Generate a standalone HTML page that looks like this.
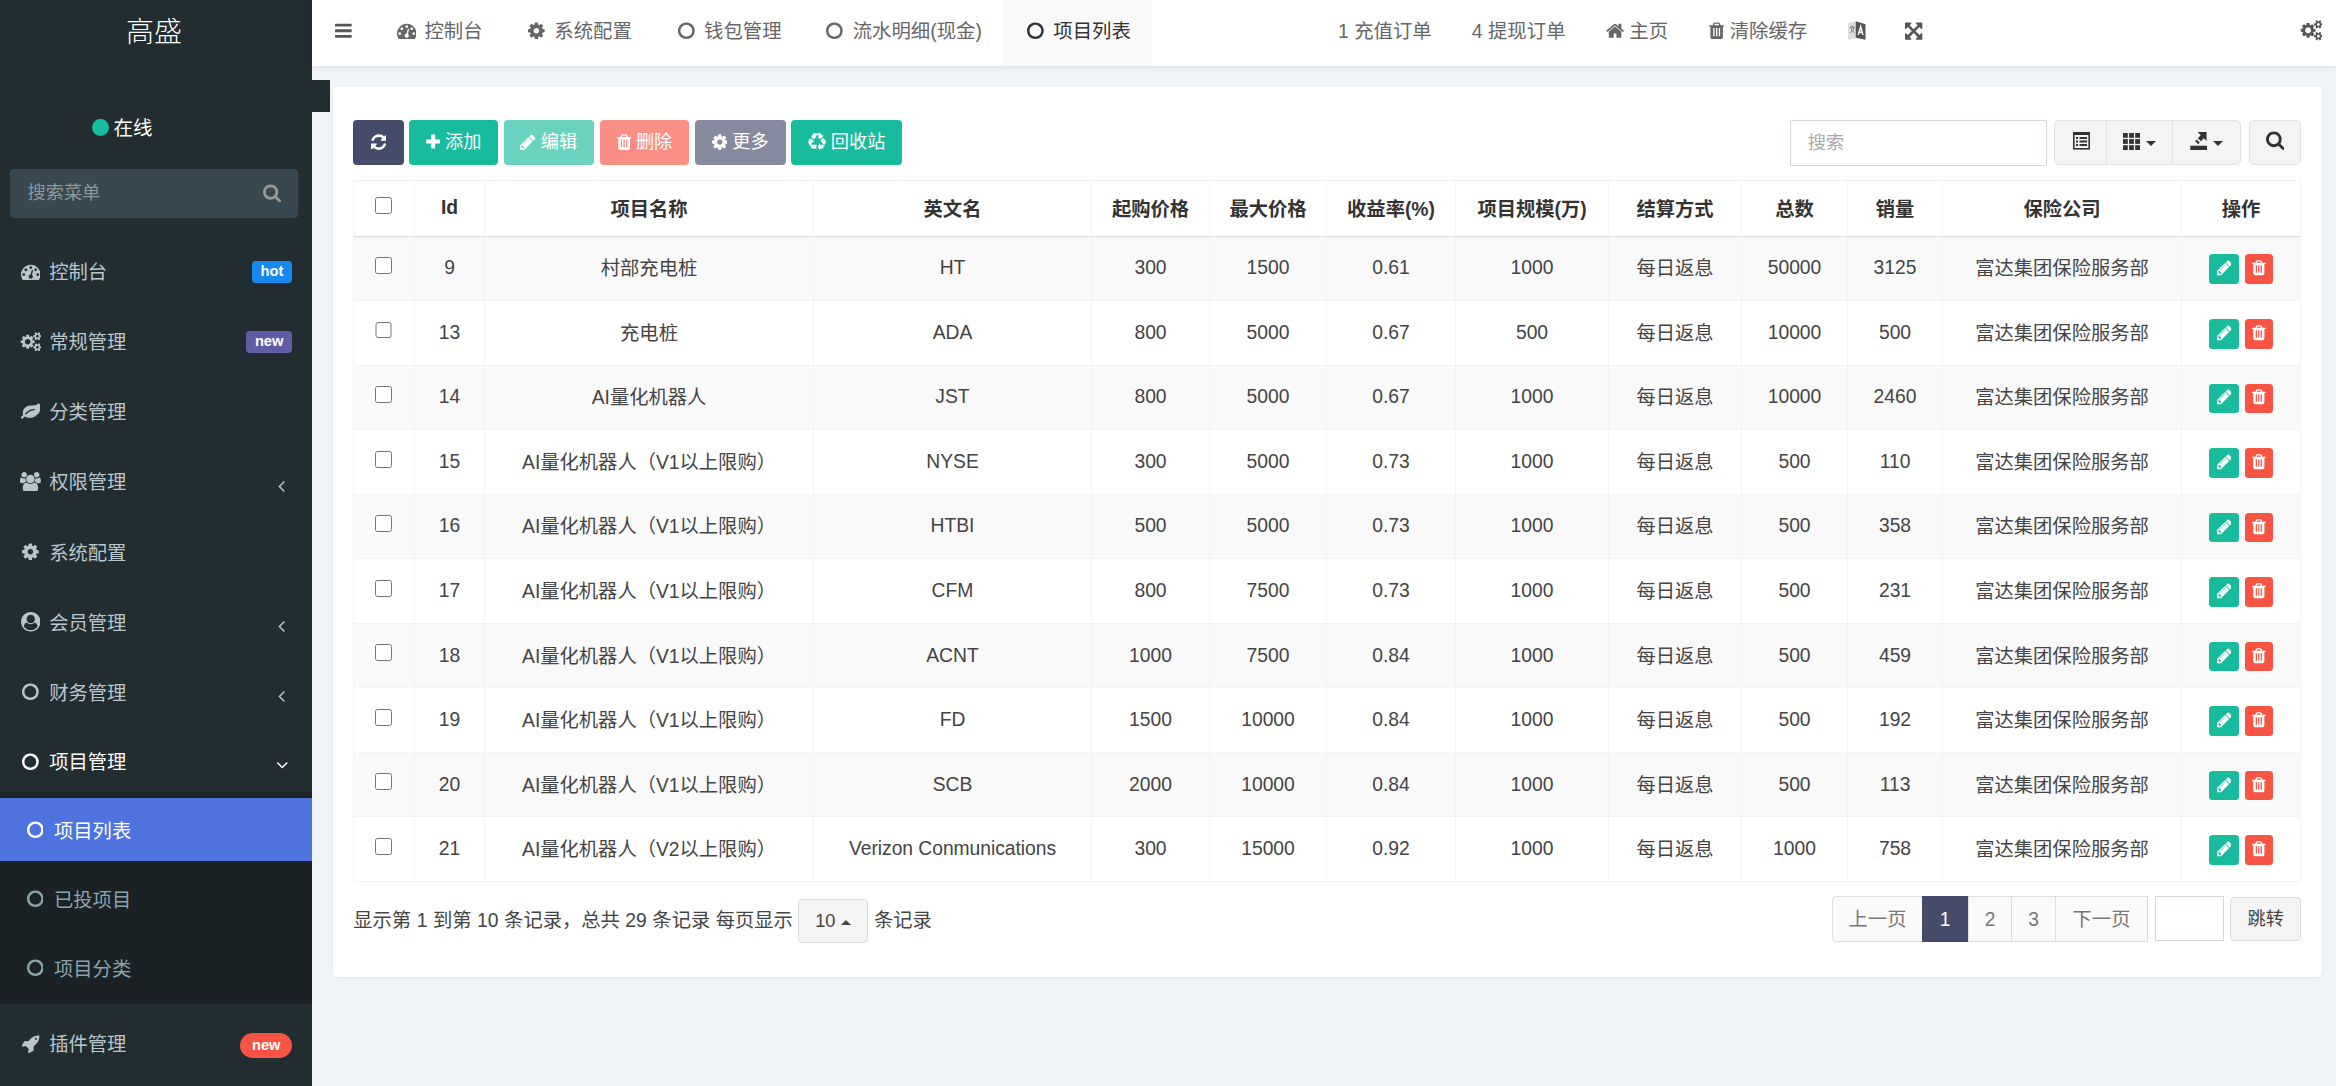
<!DOCTYPE html>
<html lang="zh-CN"><head><meta charset="utf-8"><title>高盛</title>
<style>
*{box-sizing:border-box}
html,body{margin:0;padding:0}
body{width:2336px;height:1086px;background:#f1f4f6;font-family:"Liberation Sans","Noto Sans CJK SC",sans-serif;font-size:19.5px;color:#333;position:relative}
a{text-decoration:none;color:inherit}
ul{list-style:none;margin:0;padding:0}
svg.fa{display:inline-block;vertical-align:-0.143em;flex:none}
.fw{display:inline-block;text-align:center}
/* sidebar */
.sidebar{position:absolute;left:0;top:0;width:312px;height:1086px;background:#222d32;color:#b8c7ce;font-size:19.3px}
.logo{position:absolute;left:0;top:0;width:308px;height:65px;line-height:65px;text-align:center;color:#fff;font-size:28px;font-weight:300}
.logoline{position:absolute;left:0;top:65.5px;width:312px;height:1px;background:#263238}
.user-panel{position:absolute;left:0;top:108px;width:312px;height:40px;color:#fff}
.user-panel .dot{position:absolute;left:92px;top:11.2px;width:16.8px;height:16.8px;border-radius:50%;background:#18bc9c}
.user-panel .txt{position:absolute;left:113.5px;top:0;line-height:40px;font-size:19.5px}
.sidebar-form{position:absolute;left:10px;top:169px;width:288.4px;height:49.2px;background:#374850;border-radius:4px}
.sidebar-form input{position:absolute;left:0;top:0;width:100%;height:100%;border:0;outline:0;background:transparent;padding:0;margin:0}
.sidebar-form .ph{position:absolute;left:17.5px;top:0;line-height:49.2px;font-size:18.2px;color:#8c979d}
.sidebar-form .sb{position:absolute;left:253.2px;top:13.6px;color:#999}
.menu li{position:absolute;left:0;width:312px}
.menu li>a{display:flex;align-items:center;height:61.6px;padding-left:18.1px;position:relative;color:#b8c7ce}
.menu li.active>a{color:#fff}
.menu li>a .t{margin-left:6.1px;position:relative;top:-0.3px}
.menu li>a .fw,.sub a .fw{position:relative;top:1px}
.menu .badge{position:absolute;right:19.9px;top:50%;color:#fff;font-weight:bold;font-size:14.6px;line-height:21.8px;height:21.8px;margin-top:-10.5px;padding:0 8.8px;border-radius:4px;text-align:center}
.menu .ang{position:absolute;left:277.8px;top:24.6px;}
.menu .angd{left:276px;top:24.2px}
.sub{position:absolute;left:0;top:792.4px;width:312px;height:211.6px;background:#1a2226}
.sub a{position:absolute;left:0;width:312px;height:63px;display:flex;align-items:center;padding-left:22.4px;color:#8aa4af}
.sub a .t{margin-left:6.6px}
.sub a.on{background:#4e73df;color:#fff}
/* header */
.header{position:absolute;left:312px;top:0;width:2024px;height:66px;background:#fff;box-shadow:0 1px 5px rgba(0,21,41,.10);color:#666;white-space:nowrap}
.header .it{position:absolute;top:0;height:66px;line-height:63px;display:block;font-size:19.4px}
.header .tab{padding:0 20px}
.header .tab.on{background:#f9f9f9;color:#333}
/* content */
.blk{position:absolute;left:312px;top:80px;width:18.3px;height:32px;background:#222d32}
.panel{position:absolute;left:333px;top:87px;width:1988.6px;height:890px;background:#fff;border-radius:5px;box-shadow:0 1px 3px rgba(0,0,0,.06)}
.btn{position:absolute;top:120.4px;height:44.2px;border-radius:4px;color:#fff;font-size:18.2px;line-height:44.2px;text-align:center;white-space:nowrap}
.btn .fa{vertical-align:-0.143em}
.tb{position:absolute;background:#f4f4f4;border:1px solid #e2e2e2}
.search{position:absolute;left:1790.3px;top:120.4px;width:256.8px;height:45.4px;border:1.3px solid #d2d6de;background:#fff;border-radius:1px}
.search input,.jump input{position:absolute;left:0;top:0;width:100%;height:100%;border:0;outline:0;background:transparent;padding:0;margin:0}
.search span{position:absolute;left:16.4px;top:0;line-height:44px;font-size:18.2px;color:#a9a9a9}
/* table */
table.t{font-size:19.3px;position:absolute;left:353px;top:180px;width:1948px;border-collapse:separate;border-spacing:0;table-layout:fixed;border-right:1px solid #f3f3f3;border-bottom:1px solid #f3f3f3}
table.t th,table.t td{border-left:1px solid #f3f3f3;border-top:1px solid #f3f3f3;text-align:center;padding:0;white-space:nowrap;overflow:hidden}
table.t th{height:57px;font-weight:bold;color:#333;border-bottom:1px solid #ddd}
table.t td{height:64.55px;color:#444}
table.t tbody tr:first-child td{height:63.05px;padding-bottom:2px}
table.t th{padding-bottom:0.6px}
.c{position:relative;top:-1px}
table.t tbody tr:nth-child(odd) td{background:#f9f9f9}
input.cb{width:16.9px;height:16.9px;margin:0;padding:0;vertical-align:middle;position:relative;top:-3.7px;left:-0.6px}
th input.cb{top:-3.2px}
.xb{display:inline-block;height:29.5px;border-radius:3.5px;vertical-align:middle;color:#fff;line-height:29.5px;text-align:center;font-size:17.4px;position:relative;top:1px}
.xb svg{vertical-align:-0.13em}
/* pagination */
.pinfo{position:absolute;left:353.3px;top:899px;line-height:44px;font-size:19.3px;color:#444;white-space:nowrap;word-spacing:0.2px}
.psize{position:absolute;left:797.7px;top:899.2px;width:70.4px;height:43.4px;border:1px solid #ddd;background:#f4f4f4;border-radius:4px;line-height:43px;text-align:center;font-size:18.2px;color:#444}
.pg{position:absolute;top:896.2px;height:45.5px;border:1px solid #ddd;background:#fafafa;color:#777;line-height:45.5px;text-align:center;font-size:19.3px}
</style></head><body>
<aside class="sidebar">
<a class="logo">高盛</a><div class="logoline"></div>
<div class="user-panel"><i class="dot"></i><span class="txt">在线</span></div>
<form class="sidebar-form"><input type="text" name="q"><span class="ph">搜索菜单</span><span class="sb"><svg class="fa" width="18.11" height="19.5" viewBox="64 0 1664 1792" style=""><path fill="#999" d="M1216 832q0-185-131.500-316.500t-316.500-131.500-316.500 131.500-131.500 316.500 131.500 316.500 316.500 131.500 316.500-131.500 131.500-316.500zm512 832q0 52-38 90t-90 38q-54 0-90-38l-343-342q-179 124-399 124-143 0-273.500-55.500t-225-150-150-225-55.500-273.500 55.500-273.500 150-225 225-150 273.500-55.500 273.500 55.500 225 150 150 225 55.500 273.500q0 220-124 399l343 343q37 37 37 90z"/></svg></span></form>
<ul class="menu">
<li style="top:240.6px"><a><span class="fw" style="width:25.07px;"><svg class="fa" width="19.5" height="19.5" viewBox="0 0 1792 1792" style=""><path fill="currentColor" d="M384 1152q0-53-37.500-90.500t-90.500-37.500-90.500 37.500-37.500 90.500 37.500 90.500 90.500 37.500 90.500-37.500 37.500-90.500zm192-448q0-53-37.500-90.500t-90.500-37.500-90.500 37.500-37.500 90.500 37.500 90.500 90.500 37.500 90.500-37.500 37.500-90.500zm428 481l101-382q6-26-7.500-48.500t-38.500-29.500-48 6.500-30 39.500l-101 382q-60 5-107 43.500t-63 98.500q-20 77 20 146t117 89 146-20 89-117q16-60-6-117t-72-91zm660-33q0-53-37.500-90.500t-90.500-37.500-90.500 37.500-37.500 90.500 37.500 90.500 90.500 37.500 90.500-37.500 37.500-90.500zm-640-640q0-53-37.500-90.500t-90.500-37.500-90.500 37.500-37.500 90.500 37.500 90.500 90.500 37.500 90.500-37.500 37.500-90.500zm448 192q0-53-37.500-90.500t-90.500-37.500-90.500 37.500-37.500 90.500 37.500 90.500 90.500 37.500 90.500-37.500 37.500-90.500zm320 448q0 261-141 483-19 29-54 29h-1402q-35 0-54-29-141-221-141-483 0-182 71-348t191-286 286-191 348-71 348 71 286 191 191 286 71 348z"/></svg></span><span class="t">控制台</span><small class="badge" style="background:#1688f0">hot</small></a></li>
<li style="top:310.7px"><a><span class="fw" style="width:25.07px;"><svg class="fa" width="20.89" height="19.5" viewBox="0 0 1920 1792" style=""><path fill="currentColor" d="M960 896q0-106-75-181t-181-75-181 75-75 181 75 181 181 75 181-75 75-181zm768 512q0-52-38-90t-90-38-90 38-38 90q0 53 37.500 90.500t90.500 37.500 90.500-37.500 37.500-90.500zm0-1024q0-52-38-90t-90-38-90 38-38 90q0 53 37.500 90.500t90.500 37.500 90.500-37.500 37.500-90.500zm-384 421v185q0 10-7 19.500t-16 10.500l-155 24q-11 35-32 76 34 48 90 115 7 11 7 20 0 12-7 19-23 30-82.500 89.500t-78.500 59.500q-11 0-21-7l-115-90q-37 19-77 31-11 108-23 155-7 24-30 24h-186q-11 0-20-7.500t-10-17.500l-23-153q-34-10-75-31l-118 89q-7 7-20 7-11 0-21-8-144-133-144-160 0-9 7-19 10-14 41-53t47-61q-23-44-35-82l-152-24q-10-1-17-9.500t-7-19.500v-185q0-10 7-19.500t16-10.500l155-24q11-35 32-76-34-48-90-115-7-11-7-20 0-12 7-20 22-30 82-89t79-59q11 0 21 7l115 90q34-18 77-32 11-108 23-154 7-24 30-24h186q11 0 20 7.500t10 17.500l23 153q34 10 75 31l118-89q8-7 20-7 11 0 21 8 144 133 144 160 0 8-7 19-12 16-42 54t-45 60q23 48 34 82l152 23q10 2 17 10.500t7 19.500zm640 533v140q0 16-149 31-12 27-30 52 51 113 51 138 0 4-4 7-122 71-124 71-8 0-46-47t-52-68q-20 2-30 2t-30-2q-14 21-52 68t-46 47q-2 0-124-71-4-3-4-7 0-25 51-138-18-25-30-52-149-15-149-31v-140q0-16 149-31 13-29 30-52-51-113-51-138 0-4 4-7 4-2 35-20t59-34 30-16q8 0 46 46.500t52 67.500q20-2 30-2t30 2q51-71 92-112l6-2q4 0 124 70 4 3 4 7 0 25-51 138 17 23 30 52 149 15 149 31zm0-1024v140q0 16-149 31-12 27-30 52 51 113 51 138 0 4-4 7-122 71-124 71-8 0-46-47t-52-68q-20 2-30 2t-30-2q-14 21-52 68t-46 47q-2 0-124-71-4-3-4-7 0-25 51-138-18-25-30-52-149-15-149-31v-140q0-16 149-31 13-29 30-52-51-113-51-138 0-4 4-7 4-2 35-20t59-34 30-16q8 0 46 46.500t52 67.500q20-2 30-2t30 2q51-71 92-112l6-2q4 0 124 70 4 3 4 7 0 25-51 138 17 23 30 52 149 15 149 31z"/></svg></span><span class="t">常规管理</span><small class="badge" style="background:#605ca8">new</small></a></li>
<li style="top:380.8px"><a><span class="fw" style="width:25.07px;"><svg class="fa" width="19.5" height="19.5" viewBox="0 0 1792 1792" style=""><path fill="currentColor" d="M1280 704q0-26-19-45t-45-19q-172 0-318 49.500t-259.500 134-235.500 219.500q-19 21-19 45 0 26 19 45t45 19q24 0 45-19 27-24 74-71t67-66q137-124 268.500-176t313.500-52q26 0 45-19t19-45zm512-198q0 95-20 193-46 224-184.500 383t-357.500 268q-214 108-438 108-148 0-286-47-15-5-88-42t-96-37q-16 0-39.500 32t-45 70-52.500 70-60 32q-43 0-63.500-17.500t-45.500-59.500q-2-4-6-11t-5.500-10-3-9.500-1.500-13.500q0-35 31-73.500t68-65.500 68-56 31-48q0-4-14-38t-16-44q-9-51-9-104 0-115 43.500-220t119-184.500 170.500-139 204-95.500q55-18 145-25.500t179.500-9 178.500-6 163.500-24 113.500-56.500l29.500-29.500 29.500-28 27-20 36.500-16 43.500-4.500q39 0 70.500 46t47.500 112 24 124 8 96z"/></svg></span><span class="t">分类管理</span></a></li>
<li style="top:450.9px"><a><span class="fw" style="width:25.07px;"><svg class="fa" width="20.89" height="19.5" viewBox="0 0 1920 1792" style=""><path fill="currentColor" d="M593 896q-162 5-265 128h-134q-82 0-138-40.500t-56-118.500q0-353 124-353 6 0 43.500 21t97.500 42.500 119 21.500q67 0 133-23-5 37-5 66 0 139 81 256zm1071 637q0 120-73 189.500t-194 69.500h-874q-121 0-194-69.500t-73-189.500q0-53 3.500-103.500t14-109 26.500-108.500 43-97.500 62-81 85.500-53.500 111.500-20q10 0 43 21.500t73 48 107 48 135 21.500 135-21.500 107-48 73-48 43-21.500q61 0 111.500 20t85.500 53.500 62 81 43 97.500 26.500 108.500 14 109 3.500 103.500zm-1024-1277q0 106-75 181t-181 75-181-75-75-181 75-181 181-75 181 75 75 181zm704 384q0 159-112.500 271.500t-271.500 112.500-271.500-112.500-112.500-271.500 112.500-271.500 271.500-112.500 271.500 112.500 112.500 271.500zm576 225q0 78-56 118.500t-138 40.500h-134q-103-123-265-128 81-117 81-256 0-29-5-66 66 23 133 23 59 0 119-21.500t97.500-42.500 43.500-21q124 0 124 353zm-128-609q0 106-75 181t-181 75-181-75-75-181 75-181 181-75 181 75 75 181z"/></svg></span><span class="t">权限管理</span><span class="ang"><svg class="fa" width="6.96" height="19.5" viewBox="576 0 640 1792" style=""><path fill="currentColor" d="M1203 544q0 13-10 23l-393 393 393 393q10 10 10 23t-10 23l-50 50q-10 10-23 10t-23-10l-466-466q-10-10-10-23t10-23l466-466q10-10 23-10t23 10l50 50q10 10 10 23z"/></svg></span></a></li>
<li style="top:521.0px"><a><span class="fw" style="width:25.07px;"><svg class="fa" width="16.71" height="19.5" viewBox="128 0 1536 1792" style=""><path fill="currentColor" d="M1152 896q0-106-75-181t-181-75-181 75-75 181 75 181 181 75 181-75 75-181zm512-109v222q0 12-8 23t-20 13l-185 28q-19 54-39 91 35 50 107 138 10 12 10 25t-9 23q-27 37-99 108t-94 71q-12 0-26-9l-138-108q-44 23-91 38-16 136-29 186-7 28-36 28h-222q-14 0-24.500-8.500t-11.500-21.500l-28-184q-49-16-90-37l-141 107q-10 9-25 9-14 0-25-11-126-114-165-168-7-10-7-23 0-12 8-23 15-21 51-66.500t54-70.500q-27-50-41-99l-183-27q-13-2-21-12.500t-8-23.500v-222q0-12 8-23t19-13l186-28q14-46 39-92-40-57-107-138-10-12-10-24 0-10 9-23 26-36 98.500-107.500t94.500-71.500q13 0 26 10l138 107q44-23 91-38 16-136 29-186 7-28 36-28h222q14 0 24.500 8.500t11.500 21.500l28 184q49 16 90 37l142-107q9-9 24-9 13 0 25 10 129 119 165 170 7 8 7 22 0 12-8 23-15 21-51 66.500t-54 70.500q26 50 41 98l183 28q13 2 21 12.500t8 23.500z"/></svg></span><span class="t">系统配置</span></a></li>
<li style="top:591.1px"><a><span class="fw" style="width:25.07px;"><svg class="fa" width="19.5" height="19.5" viewBox="0 0 1792 1792" style=""><path fill="currentColor" d="M1523 1339q-22-155-87.500-257.500t-184.500-118.500q-67 74-159.500 115.500t-195.500 41.500-195.500-41.500-159.500-115.500q-119 16-184.500 118.500t-87.500 257.500q106 150 271 237.500t356 87.500 356-87.500 271-237.500zm-243-699q0-159-112.500-271.500t-271.500-112.500-271.500 112.500-112.500 271.500 112.500 271.500 271.500 112.500 271.500-112.500 112.500-271.500zm512 256q0 182-71 347.500t-190.500 286-285.500 191.500-349 71q-182 0-348-71t-286-191-191-286-71-348 71-348 191-286 286-191 348-71 348 71 286 191 191 286 71 348z"/></svg></span><span class="t">会员管理</span><span class="ang"><svg class="fa" width="6.96" height="19.5" viewBox="576 0 640 1792" style=""><path fill="currentColor" d="M1203 544q0 13-10 23l-393 393 393 393q10 10 10 23t-10 23l-50 50q-10 10-23 10t-23-10l-466-466q-10-10-10-23t10-23l466-466q10-10 23-10t23 10l50 50q10 10 10 23z"/></svg></span></a></li>
<li style="top:661.2px"><a><span class="fw" style="width:25.07px;"><svg class="fa" width="16.71" height="19.5" viewBox="128 0 1536 1792" style=""><path fill="currentColor" d="M896 352q-148 0-273 73t-198 198-73 273 73 273 198 198 273 73 273-73 198-198 73-273-73-273-198-198-273-73zm768 544q0 209-103 385.500t-279.500 279.500-385.500 103-385.500-103-279.500-279.500-103-385.500 103-385.500 279.500-279.500 385.500-103 385.500 103 279.500 279.500 103 385.500z"/></svg></span><span class="t">财务管理</span><span class="ang"><svg class="fa" width="6.96" height="19.5" viewBox="576 0 640 1792" style=""><path fill="currentColor" d="M1203 544q0 13-10 23l-393 393 393 393q10 10 10 23t-10 23l-50 50q-10 10-23 10t-23-10l-466-466q-10-10-10-23t10-23l466-466q10-10 23-10t23 10l50 50q10 10 10 23z"/></svg></span></a></li>
<li class="active" style="top:730.8px"><a><span class="fw" style="width:25.07px;"><svg class="fa" width="16.71" height="19.5" viewBox="128 0 1536 1792" style=""><path fill="currentColor" d="M896 352q-148 0-273 73t-198 198-73 273 73 273 198 198 273 73 273-73 198-198 73-273-73-273-198-198-273-73zm768 544q0 209-103 385.500t-279.500 279.500-385.500 103-385.500-103-279.500-279.500-103-385.500 103-385.500 279.500-279.500 385.500-103 385.500 103 279.500 279.500 103 385.500z"/></svg></span><span class="t">项目管理</span><span class="ang angd"><svg class="fa" width="12.54" height="19.5" viewBox="320 0 1152 1792" style=""><path fill="currentColor" d="M1395 736q0 13-10 23l-466 466q-10 10-23 10t-23-10l-466-466q-10-10-10-23t10-23l50-50q10-10 23-10t23 10l393 393 393-393q10-10 23-10t23 10l50 50q10 10 10 23z"/></svg></span></a></li>
<li style="top:1012.5px"><a><span class="fw" style="width:25.07px;"><svg class="fa" width="18.11" height="19.5" viewBox="64 0 1664 1792" style=""><path fill="currentColor" d="M1440 448q0-40-28-68t-68-28-68 28-28 68 28 68 68 28 68-28 28-68zm224-288q0 249-75.500 430.500t-253.500 360.500q-81 80-195 176l-20 379q-2 16-16 26l-384 224q-7 4-16 4-12 0-23-9l-64-64q-13-14-8-32l85-276-281-281-276 85q-3 1-9 1-14 0-23-9l-64-64q-17-19-5-39l224-384q10-14 26-16l379-20q96-114 176-195 188-187 358-258t431-71q14 0 24 9.500t10 22.500z"/></svg></span><span class="t">插件管理</span><small class="badge" style="background:#f75444;border-radius:13px;height:24.6px;line-height:24.6px;margin-top:-10.1px;padding:0 11.7px">new</small></a></li>
</ul>
<div class="sub">
<a class="on" style="top:5.7px"><span class="fw" style="width:25.07px;"><svg class="fa" width="16.71" height="19.5" viewBox="128 0 1536 1792" style=""><path fill="currentColor" d="M896 352q-148 0-273 73t-198 198-73 273 73 273 198 198 273 73 273-73 198-198 73-273-73-273-198-198-273-73zm768 544q0 209-103 385.500t-279.500 279.500-385.500 103-385.500-103-279.500-279.500-103-385.500 103-385.500 279.500-279.500 385.500-103 385.500 103 279.500 279.500 103 385.500z"/></svg></span><span class="t">项目列表</span></a>
<a class="" style="top:74.7px"><span class="fw" style="width:25.07px;"><svg class="fa" width="16.71" height="19.5" viewBox="128 0 1536 1792" style=""><path fill="currentColor" d="M896 352q-148 0-273 73t-198 198-73 273 73 273 198 198 273 73 273-73 198-198 73-273-73-273-198-198-273-73zm768 544q0 209-103 385.500t-279.500 279.500-385.500 103-385.500-103-279.500-279.500-103-385.500 103-385.500 279.500-279.500 385.500-103 385.500 103 279.500 279.500 103 385.500z"/></svg></span><span class="t">已投项目</span></a>
<a class="" style="top:143.7px"><span class="fw" style="width:25.07px;"><svg class="fa" width="16.71" height="19.5" viewBox="128 0 1536 1792" style=""><path fill="currentColor" d="M896 352q-148 0-273 73t-198 198-73 273 73 273 198 198 273 73 273-73 198-198 73-273-73-273-198-198-273-73zm768 544q0 209-103 385.500t-279.500 279.500-385.500 103-385.500-103-279.500-279.500-103-385.500 103-385.500 279.500-279.500 385.500-103 385.500 103 279.500 279.500 103 385.500z"/></svg></span><span class="t">项目分类</span></a>
</div>
</aside>
<header class="header">
<a class="it" style="left:22.8px"><svg class="fa" width="16.71" height="19.5" viewBox="128 0 1536 1792" style=""><path fill="#555" d="M1664 1344v128q0 26-19 45t-45 19h-1408q-26 0-45-19t-19-45v-128q0-26 19-45t45-19h1408q26 0 45 19t19 45zm0-512v128q0 26-19 45t-45 19h-1408q-26 0-45-19t-19-45v-128q0-26 19-45t45-19h1408q26 0 45 19t19 45zm0-512v128q0 26-19 45t-45 19h-1408q-26 0-45-19t-19-45v-128q0-26 19-45t45-19h1408q26 0 45 19t19 45z"/></svg></a>
<a class="it tab" style="left:62.00px;"><span class="fw" style="width:25.07px;"><svg class="fa" width="19.5" height="19.5" viewBox="0 0 1792 1792" style=""><path fill="currentColor" d="M384 1152q0-53-37.500-90.500t-90.500-37.500-90.500 37.500-37.500 90.500 37.500 90.500 90.500 37.500 90.500-37.500 37.500-90.500zm192-448q0-53-37.500-90.500t-90.500-37.500-90.500 37.500-37.500 90.500 37.500 90.500 90.500 37.500 90.500-37.500 37.500-90.500zm428 481l101-382q6-26-7.500-48.500t-38.500-29.500-48 6.500-30 39.500l-101 382q-60 5-107 43.500t-63 98.500q-20 77 20 146t117 89 146-20 89-117q16-60-6-117t-72-91zm660-33q0-53-37.500-90.500t-90.500-37.500-90.500 37.500-37.500 90.500 37.500 90.500 90.500 37.500 90.500-37.500 37.500-90.500zm-640-640q0-53-37.500-90.500t-90.500-37.500-90.500 37.500-37.500 90.500 37.500 90.500 90.500 37.500 90.500-37.500 37.500-90.500zm448 192q0-53-37.500-90.500t-90.500-37.500-90.500 37.500-37.500 90.500 37.500 90.500 90.500 37.500 90.500-37.500 37.500-90.500zm320 448q0 261-141 483-19 29-54 29h-1402q-35 0-54-29-141-221-141-483 0-182 71-348t191-286 286-191 348-71 348 71 286 191 191 286 71 348z"/></svg></span> 控制台</a>
<a class="it tab" style="left:191.85px;"><span class="fw" style="width:25.07px;"><svg class="fa" width="16.71" height="19.5" viewBox="128 0 1536 1792" style=""><path fill="currentColor" d="M1152 896q0-106-75-181t-181-75-181 75-75 181 75 181 181 75 181-75 75-181zm512-109v222q0 12-8 23t-20 13l-185 28q-19 54-39 91 35 50 107 138 10 12 10 25t-9 23q-27 37-99 108t-94 71q-12 0-26-9l-138-108q-44 23-91 38-16 136-29 186-7 28-36 28h-222q-14 0-24.500-8.500t-11.500-21.500l-28-184q-49-16-90-37l-141 107q-10 9-25 9-14 0-25-11-126-114-165-168-7-10-7-23 0-12 8-23 15-21 51-66.500t54-70.500q-27-50-41-99l-183-27q-13-2-21-12.500t-8-23.500v-222q0-12 8-23t19-13l186-28q14-46 39-92-40-57-107-138-10-12-10-24 0-10 9-23 26-36 98.500-107.500t94.500-71.500q13 0 26 10l138 107q44-23 91-38 16-136 29-186 7-28 36-28h222q14 0 24.500 8.500t11.500 21.500l28 184q49 16 90 37l142-107q9-9 24-9 13 0 25 10 129 119 165 170 7 8 7 22 0 12-8 23-15 21-51 66.500t-54 70.500q26 50 41 98l183 28q13 2 21 12.500t8 23.500z"/></svg></span> 系统配置</a>
<a class="it tab" style="left:341.65px;"><span class="fw" style="width:25.07px;"><svg class="fa" width="16.71" height="19.5" viewBox="128 0 1536 1792" style=""><path fill="currentColor" d="M896 352q-148 0-273 73t-198 198-73 273 73 273 198 198 273 73 273-73 198-198 73-273-73-273-198-198-273-73zm768 544q0 209-103 385.500t-279.500 279.500-385.500 103-385.500-103-279.500-279.500-103-385.500 103-385.500 279.500-279.500 385.500-103 385.500 103 279.500 279.500 103 385.500z"/></svg></span> 钱包管理</a>
<a class="it tab" style="left:490.25px;"><span class="fw" style="width:25.07px;"><svg class="fa" width="16.71" height="19.5" viewBox="128 0 1536 1792" style=""><path fill="currentColor" d="M896 352q-148 0-273 73t-198 198-73 273 73 273 198 198 273 73 273-73 198-198 73-273-73-273-198-198-273-73zm768 544q0 209-103 385.500t-279.500 279.500-385.500 103-385.500-103-279.500-279.500-103-385.500 103-385.500 279.500-279.500 385.500-103 385.500 103 279.500 279.500 103 385.500z"/></svg></span> 流水明细(现金)</a>
<a class="it tab on" style="left:690.90px;width:149.4px;"><span class="fw" style="width:25.07px;"><svg class="fa" width="16.71" height="19.5" viewBox="128 0 1536 1792" style=""><path fill="currentColor" d="M896 352q-148 0-273 73t-198 198-73 273 73 273 198 198 273 73 273-73 198-198 73-273-73-273-198-198-273-73zm768 544q0 209-103 385.500t-279.500 279.500-385.500 103-385.500-103-279.500-279.500-103-385.500 103-385.500 279.500-279.500 385.500-103 385.500 103 279.500 279.500 103 385.500z"/></svg></span> 项目列表</a>
<a class="it" style="left:1026.0px">1 充值订单</a>
<a class="it" style="left:1159.8px">4 提现订单</a>
<a class="it" style="left:1293.8px"><svg class="fa" width="18.11" height="19.5" viewBox="64 0 1664 1792" style=""><path fill="currentColor" d="M1472 992v480q0 26-19 45t-45 19h-384v-384h-256v384h-384q-26 0-45-19t-19-45v-480q0-1 .5-3t.5-3l575-474 575 474q1 2 1 6zm223-69l-62 74q-8 9-21 11h-3q-13 0-21-7l-692-577-692 577q-12 8-24 7-13-2-21-11l-62-74q-8-10-7-23.500t11-21.500l719-599q32-26 76-26t76 26l244 204v-195q0-14 9-23t23-9h192q14 0 23 9t9 23v408l219 182q10 8 11 21.500t-7 23.500z"/></svg> 主页</a>
<a class="it" style="left:1397.0px"><svg class="fa" width="15.32" height="19.5" viewBox="192 0 1408 1792" style=""><path fill="currentColor" d="M704 1376v-704q0-14-9-23t-23-9h-64q-14 0-23 9t-9 23v704q0 14 9 23t23 9h64q14 0 23-9t9-23zm256 0v-704q0-14-9-23t-23-9h-64q-14 0-23 9t-9 23v704q0 14 9 23t23 9h64q14 0 23-9t9-23zm256 0v-704q0-14-9-23t-23-9h-64q-14 0-23 9t-9 23v704q0 14 9 23t23 9h64q14 0 23-9t9-23zm-544-992h448l-48-117q-7-9-17-11h-317q-10 2-17 11zm928 32v64q0 14-9 23t-23 9h-96v948q0 83-47 143.500t-113 60.500h-832q-66 0-113-58.500t-47-141.500v-952h-96q-14 0-23-9t-9-23v-64q0-14 9-23t23-9h309l70-167q15-37 54-63t79-26h320q40 0 79 26t54 63l70 167h309q14 0 23 9t9 23z"/></svg> 清除缓存</a>
<a class="it" style="left:1535.0px"><svg class="fa" width="19.5" height="21" viewBox="0 0 20 21"><path d="M1 3 L10 1 L10 18 L1 20 Z" fill="#ddd"/><path d="M3.2 7h4.6M5.5 5.6v1.4M3.8 7c.6 3 2 4.600 3.800 5.600M7.200 7c-.5 2.800-1.800 4.600-4 5.800" stroke="#777" stroke-width="1" fill="none"/><path d="M9 1 L19 4 L19 20 L9 18 Z" fill="#555"/><path d="M11.6 15 L14 6.500 L16.400 15 M12.400 12.300 h3.200" stroke="#fff" stroke-width="1.500" fill="none"/></svg></a>
<a class="it" style="left:1593.4px"><svg class="fa" width="17.31" height="20.2" viewBox="128 0 1536 1792" style=""><path fill="#555" d="M1411 541l-355 355 355 355 144-144q29-31 70-14 39 17 39 59v448q0 26-19 45t-45 19h-448q-42 0-59-40-17-39 14-69l144-144-355-355-355 355 144 144q31 30 14 69-17 40-59 40h-448q-26 0-45-19t-19-45v-448q0-42 40-59 39-17 69 14l144 144 355-355-355-355-144 144q-19 19-45 19-12 0-24-5-40-17-40-59v-448q0-26 19-45t45-19h448q42 0 59 40 17 39-14 69l-144 144 355 355 355-355-144-144q-31-30-14-69 17-40 59-40h448q26 0 45 19t19 45v448q0 42-39 59-13 5-25 5-26 0-45-19z"/></svg></a>
<a class="it" style="left:1987.6px"><svg class="fa" width="22.07" height="20.6" viewBox="0 0 1920 1792" style=""><path fill="#555" d="M960 896q0-106-75-181t-181-75-181 75-75 181 75 181 181 75 181-75 75-181zm768 512q0-52-38-90t-90-38-90 38-38 90q0 53 37.500 90.500t90.500 37.500 90.500-37.500 37.500-90.500zm0-1024q0-52-38-90t-90-38-90 38-38 90q0 53 37.500 90.500t90.500 37.500 90.500-37.500 37.500-90.500zm-384 421v185q0 10-7 19.500t-16 10.500l-155 24q-11 35-32 76 34 48 90 115 7 11 7 20 0 12-7 19-23 30-82.500 89.500t-78.500 59.500q-11 0-21-7l-115-90q-37 19-77 31-11 108-23 155-7 24-30 24h-186q-11 0-20-7.500t-10-17.500l-23-153q-34-10-75-31l-118 89q-7 7-20 7-11 0-21-8-144-133-144-160 0-9 7-19 10-14 41-53t47-61q-23-44-35-82l-152-24q-10-1-17-9.500t-7-19.500v-185q0-10 7-19.500t16-10.500l155-24q11-35 32-76-34-48-90-115-7-11-7-20 0-12 7-20 22-30 82-89t79-59q11 0 21 7l115 90q34-18 77-32 11-108 23-154 7-24 30-24h186q11 0 20 7.500t10 17.500l23 153q34 10 75 31l118-89q8-7 20-7 11 0 21 8 144 133 144 160 0 8-7 19-12 16-42 54t-45 60q23 48 34 82l152 23q10 2 17 10.500t7 19.500zm640 533v140q0 16-149 31-12 27-30 52 51 113 51 138 0 4-4 7-122 71-124 71-8 0-46-47t-52-68q-20 2-30 2t-30-2q-14 21-52 68t-46 47q-2 0-124-71-4-3-4-7 0-25 51-138-18-25-30-52-149-15-149-31v-140q0-16 149-31 13-29 30-52-51-113-51-138 0-4 4-7 4-2 35-20t59-34 30-16q8 0 46 46.500t52 67.500q20-2 30-2t30 2q51-71 92-112l6-2q4 0 124 70 4 3 4 7 0 25-51 138 17 23 30 52 149 15 149 31zm0-1024v140q0 16-149 31-12 27-30 52 51 113 51 138 0 4-4 7-122 71-124 71-8 0-46-47t-52-68q-20 2-30 2t-30-2q-14 21-52 68t-46 47q-2 0-124-71-4-3-4-7 0-25 51-138-18-25-30-52-149-15-149-31v-140q0-16 149-31 13-29 30-52-51-113-51-138 0-4 4-7 4-2 35-20t59-34 30-16q8 0 46 46.500t52 67.500q20-2 30-2t30 2q51-71 92-112l6-2q4 0 124 70 4 3 4 7 0 25-51 138 17 23 30 52 149 15 149 31z"/></svg></a>
</header>
<div class="blk"></div>
<section class="panel"></section>
<a class="btn" style="left:353.2px;width:50.5px;background:#444c69"><svg class="fa" width="15.6" height="18.2" viewBox="128 0 1536 1792" style=""><path fill="#fff" d="M1639 1056q0 5-1 7-64 268-268 434.500t-478 166.500q-146 0-282.500-55t-243.500-157l-129 129q-19 19-45 19t-45-19-19-45v-448q0-26 19-45t45-19h448q26 0 45 19t19 45-19 45l-137 137q71 66 161 102t187 36q134 0 250-65t186-179q11-17 53-117 8-23 30-23h192q13 0 22.500 9.500t9.500 22.500zm25-800v448q0 26-19 45t-45 19h-448q-26 0-45-19t-19-45 19-45l138-138q-148-137-349-137-134 0-250 65t-186 179q-11 17-53 117-8 23-30 23h-199q-13 0-22.500-9.500t-9.500-22.500v-7q65-268 270-434.500t480-166.500q146 0 284 55.500t245 156.500l130-129q19-19 45-19t45 19 19 45z"/></svg></a>
<a class="btn" style="left:409.0px;width:89.0px;background:#18bc9c"><svg class="fa" width="14.3" height="18.2" viewBox="192 0 1408 1792" style=""><path fill="#fff" d="M1600 736v192q0 40-28 68t-68 28h-416v416q0 40-28 68t-68 28h-192q-40 0-68-28t-28-68v-416h-416q-40 0-68-28t-28-68v-192q0-40 28-68t68-28h416v-416q0-40 28-68t68-28h192q40 0 68 28t28 68v416h416q40 0 68 28t28 68z"/></svg> 添加</a>
<a class="btn" style="left:503.6px;width:90.0px;background:#6ad3bf"><svg class="fa" width="15.6" height="18.2" viewBox="128 0 1536 1792" style=""><path fill="#fff" d="M491 1536l91-91-235-235-91 91v107h128v128h107zm523-928q0-22-22-22-10 0-17 7l-542 542q-7 7-7 17 0 22 22 22 10 0 17-7l542-542q7-7 7-17zm-54-192l416 416-832 832h-416v-416zm683 96q0 53-37 90l-166 166-416-416 166-165q36-38 90-38 53 0 91 38l235 234q37 39 37 91z"/></svg> 编辑</a>
<a class="btn" style="left:599.6px;width:89.7px;background:#f98e85"><svg class="fa" width="14.3" height="18.2" viewBox="192 0 1408 1792" style=""><path fill="#fff" d="M704 1376v-704q0-14-9-23t-23-9h-64q-14 0-23 9t-9 23v704q0 14 9 23t23 9h64q14 0 23-9t9-23zm256 0v-704q0-14-9-23t-23-9h-64q-14 0-23 9t-9 23v704q0 14 9 23t23 9h64q14 0 23-9t9-23zm256 0v-704q0-14-9-23t-23-9h-64q-14 0-23 9t-9 23v704q0 14 9 23t23 9h64q14 0 23-9t9-23zm-544-992h448l-48-117q-7-9-17-11h-317q-10 2-17 11zm928 32v64q0 14-9 23t-23 9h-96v948q0 83-47 143.500t-113 60.500h-832q-66 0-113-58.500t-47-141.500v-952h-96q-14 0-23-9t-9-23v-64q0-14 9-23t23-9h309l70-167q15-37 54-63t79-26h320q40 0 79 26t54 63l70 167h309q14 0 23 9t9 23z"/></svg> 删除</a>
<a class="btn" style="left:694.8px;width:90.8px;background:#868a9f"><svg class="fa" width="15.6" height="18.2" viewBox="128 0 1536 1792" style=""><path fill="#fff" d="M1152 896q0-106-75-181t-181-75-181 75-75 181 75 181 181 75 181-75 75-181zm512-109v222q0 12-8 23t-20 13l-185 28q-19 54-39 91 35 50 107 138 10 12 10 25t-9 23q-27 37-99 108t-94 71q-12 0-26-9l-138-108q-44 23-91 38-16 136-29 186-7 28-36 28h-222q-14 0-24.500-8.500t-11.500-21.500l-28-184q-49-16-90-37l-141 107q-10 9-25 9-14 0-25-11-126-114-165-168-7-10-7-23 0-12 8-23 15-21 51-66.500t54-70.500q-27-50-41-99l-183-27q-13-2-21-12.500t-8-23.500v-222q0-12 8-23t19-13l186-28q14-46 39-92-40-57-107-138-10-12-10-24 0-10 9-23 26-36 98.500-107.500t94.500-71.500q13 0 26 10l138 107q44-23 91-38 16-136 29-186 7-28 36-28h222q14 0 24.500 8.500t11.500 21.500l28 184q49 16 90 37l142-107q9-9 24-9 13 0 25 10 129 119 165 170 7 8 7 22 0 12-8 23-15 21-51 66.500t-54 70.500q26 50 41 98l183 28q13 2 21 12.500t8 23.500z"/></svg> 更多</a>
<a class="btn" style="left:791.0px;width:110.9px;background:#18bc9c"><svg class="fa" width="18.2" height="18.2" viewBox="0 0 1792 1792" style=""><path fill="#fff" d="M836 1169l-15 368-2 22-420-29q-36-3-67-31.500t-47-65.500q-11-27-14.500-55t4-65 12-55 21.500-64 19-53q78 12 509 28zm-387-586l180 379-147-92q-63 72-111.500 144.500t-72.500 125-39.500 94.500-18.500 63l-4 21-190-357q-17-26-18-56t6-47l8-18q35-63 114-188l-140-86zm1231 517l-188 359q-12 29-36.500 46.500t-43.500 20.500l-18 4q-71 7-219 12l8 164-230-367 211-362 7 173q170 16 283 5t170-33zm-785-924q-47 63-265 435l-317-187-19-12 225-356q20-31 60-45t80-10q24 2 48.500 12t42 21 41.500 33 36 34.500 36 39.500 32 35zm655 307l212 363q18 37 12.500 76t-27.500 74q-13 20-33 37t-38 28-48.500 22-47 16-51.500 14-46 12q-34-72-265-436l313-195zm-143-226l142-83-220 373-419-20 151-86q-34-89-75-166t-75.500-123.500-64.500-80-47-46.500l-17-13 405 1q31-3 58 10.500t39 28.500l11 15q39 61 112 190z"/></svg> 回收站</a>
<div class="search"><input type="text"><span>搜索</span></div>
<div class="tb" style="left:2054.4px;top:120.4px;width:186.4px;height:44.4px;border-radius:5px"></div>
<div style="position:absolute;left:2106px;top:121px;width:1px;height:43px;background:#e2e2e2"></div>
<div style="position:absolute;left:2172px;top:121px;width:1px;height:43px;background:#e2e2e2"></div>
<div class="tb" style="left:2248.6px;top:120.4px;width:52.2px;height:44.4px;border-radius:5px"></div>
<svg style="position:absolute;left:2073px;top:132px" width="17" height="17.6" viewBox="0 0 17 17.6"><rect x="0.8" y="0.8" width="15.4" height="16" fill="none" stroke="#333" stroke-width="1.6"/><rect x="0" y="0" width="17" height="3" fill="#333"/><g fill="#333"><rect x="3" y="5" width="2" height="2"/><rect x="6.500" y="5" width="7.500" height="2"/><rect x="3" y="8.500" width="2" height="2"/><rect x="6.500" y="8.500" width="7.500" height="2"/><rect x="3" y="12" width="2" height="2"/><rect x="6.500" y="12" width="7.500" height="2"/></g></svg>
<svg style="position:absolute;left:2122.8px;top:133px" width="17" height="17" viewBox="0 0 17 17"><rect x="0.0" y="0.0" width="4.800" height="4.800" fill="#333"/><rect x="6.1" y="0.0" width="4.800" height="4.800" fill="#333"/><rect x="12.2" y="0.0" width="4.800" height="4.800" fill="#333"/><rect x="0.0" y="6.1" width="4.800" height="4.800" fill="#333"/><rect x="6.1" y="6.1" width="4.800" height="4.800" fill="#333"/><rect x="12.2" y="6.1" width="4.800" height="4.800" fill="#333"/><rect x="0.0" y="12.2" width="4.800" height="4.800" fill="#333"/><rect x="6.1" y="12.2" width="4.800" height="4.800" fill="#333"/><rect x="12.2" y="12.2" width="4.800" height="4.800" fill="#333"/></svg>
<span style="position:absolute;left:2146.4px;top:140.7px;width:0;height:0;border-left:5.2px solid transparent;border-right:5.2px solid transparent;border-top:5.8px solid #333"></span>
<svg style="position:absolute;left:2189.6px;top:131.7px" width="17" height="19" viewBox="0 0 17 19"><rect x="0.300" y="13.700" width="16.800" height="4.300" fill="#333"/><path d="M16.6 0 L16.6 9 L13.800 6.300 L11 9.300 L7.800 6.200 L10.700 3.200 L7.600 0 Z" fill="#333"/><path d="M6.600 7.400 L9.800 10.500 L8.200 12.200 L5 9 Z" fill="#333"/></svg>
<span style="position:absolute;left:2213.4px;top:140.7px;width:0;height:0;border-left:5.2px solid transparent;border-right:5.2px solid transparent;border-top:5.8px solid #333"></span>
<span style="position:absolute;left:2265.5px;top:129.3px;color:#333"><svg class="fa" width="18.57" height="20" viewBox="64 0 1664 1792" style=""><path fill="#333" d="M1216 832q0-185-131.500-316.500t-316.500-131.500-316.500 131.500-131.500 316.500 131.500 316.500 316.500 131.500 316.500-131.500 131.500-316.500zm512 832q0 52-38 90t-90 38q-54 0-90-38l-343-342q-179 124-399 124-143 0-273.500-55.500t-225-150-150-225-55.500-273.500 55.500-273.500 150-225 225-150 273.500-55.500 273.500 55.500 225 150 150 225 55.500 273.500q0 220-124 399l343 343q37 37 37 90z"/></svg></span>
<table class="t"><colgroup><col style="width:61px"><col style="width:70px"><col style="width:329px"><col style="width:278px"><col style="width:118px"><col style="width:117px"><col style="width:129px"><col style="width:153px"><col style="width:133px"><col style="width:106px"><col style="width:95px"><col style="width:239px"><col style="width:119px"></colgroup>
<thead><tr><th><input class="cb" type="checkbox"></th><th>Id</th><th>项目名称</th><th>英文名</th><th>起购价格</th><th>最大价格</th><th>收益率(%)</th><th>项目规模(万)</th><th>结算方式</th><th>总数</th><th>销量</th><th>保险公司</th><th>操作</th></tr></thead><tbody>
<tr><td><input class="cb" type="checkbox"></td><td>9</td><td><span class="c">村部充电桩</span></td><td>HT</td><td>300</td><td>1500</td><td>0.61</td><td>1000</td><td><span class="c">每日返息</span></td><td>50000</td><td>3125</td><td><span class="c">富达集团保险服务部</span></td><td><a class="xb" style="width:29.9px;background:#18bc9c"><svg class="fa" width="14.91" height="17.4" viewBox="128 0 1536 1792" style=""><path fill="#fff" d="M491 1536l91-91-235-235-91 91v107h128v128h107zm523-928q0-22-22-22-10 0-17 7l-542 542q-7 7-7 17 0 22 22 22 10 0 17-7l542-542q7-7 7-17zm-54-192l416 416-832 832h-416v-416zm683 96q0 53-37 90l-166 166-416-416 166-165q36-38 90-38 53 0 91 38l235 234q37 39 37 91z"/></svg></a><a class="xb" style="width:28.2px;background:#f75444;margin-left:5.8px"><svg class="fa" width="13.67" height="17.4" viewBox="192 0 1408 1792" style=""><path fill="#fff" d="M704 1376v-704q0-14-9-23t-23-9h-64q-14 0-23 9t-9 23v704q0 14 9 23t23 9h64q14 0 23-9t9-23zm256 0v-704q0-14-9-23t-23-9h-64q-14 0-23 9t-9 23v704q0 14 9 23t23 9h64q14 0 23-9t9-23zm256 0v-704q0-14-9-23t-23-9h-64q-14 0-23 9t-9 23v704q0 14 9 23t23 9h64q14 0 23-9t9-23zm-544-992h448l-48-117q-7-9-17-11h-317q-10 2-17 11zm928 32v64q0 14-9 23t-23 9h-96v948q0 83-47 143.500t-113 60.500h-832q-66 0-113-58.500t-47-141.500v-952h-96q-14 0-23-9t-9-23v-64q0-14 9-23t23-9h309l70-167q15-37 54-63t79-26h320q40 0 79 26t54 63l70 167h309q14 0 23 9t9 23z"/></svg></a></td></tr>
<tr><td><input class="cb" type="checkbox"></td><td>13</td><td><span class="c">充电桩</span></td><td>ADA</td><td>800</td><td>5000</td><td>0.67</td><td>500</td><td><span class="c">每日返息</span></td><td>10000</td><td>500</td><td><span class="c">富达集团保险服务部</span></td><td><a class="xb" style="width:29.9px;background:#18bc9c"><svg class="fa" width="14.91" height="17.4" viewBox="128 0 1536 1792" style=""><path fill="#fff" d="M491 1536l91-91-235-235-91 91v107h128v128h107zm523-928q0-22-22-22-10 0-17 7l-542 542q-7 7-7 17 0 22 22 22 10 0 17-7l542-542q7-7 7-17zm-54-192l416 416-832 832h-416v-416zm683 96q0 53-37 90l-166 166-416-416 166-165q36-38 90-38 53 0 91 38l235 234q37 39 37 91z"/></svg></a><a class="xb" style="width:28.2px;background:#f75444;margin-left:5.8px"><svg class="fa" width="13.67" height="17.4" viewBox="192 0 1408 1792" style=""><path fill="#fff" d="M704 1376v-704q0-14-9-23t-23-9h-64q-14 0-23 9t-9 23v704q0 14 9 23t23 9h64q14 0 23-9t9-23zm256 0v-704q0-14-9-23t-23-9h-64q-14 0-23 9t-9 23v704q0 14 9 23t23 9h64q14 0 23-9t9-23zm256 0v-704q0-14-9-23t-23-9h-64q-14 0-23 9t-9 23v704q0 14 9 23t23 9h64q14 0 23-9t9-23zm-544-992h448l-48-117q-7-9-17-11h-317q-10 2-17 11zm928 32v64q0 14-9 23t-23 9h-96v948q0 83-47 143.500t-113 60.500h-832q-66 0-113-58.500t-47-141.500v-952h-96q-14 0-23-9t-9-23v-64q0-14 9-23t23-9h309l70-167q15-37 54-63t79-26h320q40 0 79 26t54 63l70 167h309q14 0 23 9t9 23z"/></svg></a></td></tr>
<tr><td><input class="cb" type="checkbox"></td><td>14</td><td><span class="c">AI量化机器人</span></td><td>JST</td><td>800</td><td>5000</td><td>0.67</td><td>1000</td><td><span class="c">每日返息</span></td><td>10000</td><td>2460</td><td><span class="c">富达集团保险服务部</span></td><td><a class="xb" style="width:29.9px;background:#18bc9c"><svg class="fa" width="14.91" height="17.4" viewBox="128 0 1536 1792" style=""><path fill="#fff" d="M491 1536l91-91-235-235-91 91v107h128v128h107zm523-928q0-22-22-22-10 0-17 7l-542 542q-7 7-7 17 0 22 22 22 10 0 17-7l542-542q7-7 7-17zm-54-192l416 416-832 832h-416v-416zm683 96q0 53-37 90l-166 166-416-416 166-165q36-38 90-38 53 0 91 38l235 234q37 39 37 91z"/></svg></a><a class="xb" style="width:28.2px;background:#f75444;margin-left:5.8px"><svg class="fa" width="13.67" height="17.4" viewBox="192 0 1408 1792" style=""><path fill="#fff" d="M704 1376v-704q0-14-9-23t-23-9h-64q-14 0-23 9t-9 23v704q0 14 9 23t23 9h64q14 0 23-9t9-23zm256 0v-704q0-14-9-23t-23-9h-64q-14 0-23 9t-9 23v704q0 14 9 23t23 9h64q14 0 23-9t9-23zm256 0v-704q0-14-9-23t-23-9h-64q-14 0-23 9t-9 23v704q0 14 9 23t23 9h64q14 0 23-9t9-23zm-544-992h448l-48-117q-7-9-17-11h-317q-10 2-17 11zm928 32v64q0 14-9 23t-23 9h-96v948q0 83-47 143.500t-113 60.500h-832q-66 0-113-58.500t-47-141.500v-952h-96q-14 0-23-9t-9-23v-64q0-14 9-23t23-9h309l70-167q15-37 54-63t79-26h320q40 0 79 26t54 63l70 167h309q14 0 23 9t9 23z"/></svg></a></td></tr>
<tr><td><input class="cb" type="checkbox"></td><td>15</td><td><span class="c">AI量化机器人（V1以上限购）</span></td><td>NYSE</td><td>300</td><td>5000</td><td>0.73</td><td>1000</td><td><span class="c">每日返息</span></td><td>500</td><td>110</td><td><span class="c">富达集团保险服务部</span></td><td><a class="xb" style="width:29.9px;background:#18bc9c"><svg class="fa" width="14.91" height="17.4" viewBox="128 0 1536 1792" style=""><path fill="#fff" d="M491 1536l91-91-235-235-91 91v107h128v128h107zm523-928q0-22-22-22-10 0-17 7l-542 542q-7 7-7 17 0 22 22 22 10 0 17-7l542-542q7-7 7-17zm-54-192l416 416-832 832h-416v-416zm683 96q0 53-37 90l-166 166-416-416 166-165q36-38 90-38 53 0 91 38l235 234q37 39 37 91z"/></svg></a><a class="xb" style="width:28.2px;background:#f75444;margin-left:5.8px"><svg class="fa" width="13.67" height="17.4" viewBox="192 0 1408 1792" style=""><path fill="#fff" d="M704 1376v-704q0-14-9-23t-23-9h-64q-14 0-23 9t-9 23v704q0 14 9 23t23 9h64q14 0 23-9t9-23zm256 0v-704q0-14-9-23t-23-9h-64q-14 0-23 9t-9 23v704q0 14 9 23t23 9h64q14 0 23-9t9-23zm256 0v-704q0-14-9-23t-23-9h-64q-14 0-23 9t-9 23v704q0 14 9 23t23 9h64q14 0 23-9t9-23zm-544-992h448l-48-117q-7-9-17-11h-317q-10 2-17 11zm928 32v64q0 14-9 23t-23 9h-96v948q0 83-47 143.500t-113 60.500h-832q-66 0-113-58.500t-47-141.500v-952h-96q-14 0-23-9t-9-23v-64q0-14 9-23t23-9h309l70-167q15-37 54-63t79-26h320q40 0 79 26t54 63l70 167h309q14 0 23 9t9 23z"/></svg></a></td></tr>
<tr><td><input class="cb" type="checkbox"></td><td>16</td><td><span class="c">AI量化机器人（V1以上限购）</span></td><td>HTBI</td><td>500</td><td>5000</td><td>0.73</td><td>1000</td><td><span class="c">每日返息</span></td><td>500</td><td>358</td><td><span class="c">富达集团保险服务部</span></td><td><a class="xb" style="width:29.9px;background:#18bc9c"><svg class="fa" width="14.91" height="17.4" viewBox="128 0 1536 1792" style=""><path fill="#fff" d="M491 1536l91-91-235-235-91 91v107h128v128h107zm523-928q0-22-22-22-10 0-17 7l-542 542q-7 7-7 17 0 22 22 22 10 0 17-7l542-542q7-7 7-17zm-54-192l416 416-832 832h-416v-416zm683 96q0 53-37 90l-166 166-416-416 166-165q36-38 90-38 53 0 91 38l235 234q37 39 37 91z"/></svg></a><a class="xb" style="width:28.2px;background:#f75444;margin-left:5.8px"><svg class="fa" width="13.67" height="17.4" viewBox="192 0 1408 1792" style=""><path fill="#fff" d="M704 1376v-704q0-14-9-23t-23-9h-64q-14 0-23 9t-9 23v704q0 14 9 23t23 9h64q14 0 23-9t9-23zm256 0v-704q0-14-9-23t-23-9h-64q-14 0-23 9t-9 23v704q0 14 9 23t23 9h64q14 0 23-9t9-23zm256 0v-704q0-14-9-23t-23-9h-64q-14 0-23 9t-9 23v704q0 14 9 23t23 9h64q14 0 23-9t9-23zm-544-992h448l-48-117q-7-9-17-11h-317q-10 2-17 11zm928 32v64q0 14-9 23t-23 9h-96v948q0 83-47 143.500t-113 60.500h-832q-66 0-113-58.500t-47-141.500v-952h-96q-14 0-23-9t-9-23v-64q0-14 9-23t23-9h309l70-167q15-37 54-63t79-26h320q40 0 79 26t54 63l70 167h309q14 0 23 9t9 23z"/></svg></a></td></tr>
<tr><td><input class="cb" type="checkbox"></td><td>17</td><td><span class="c">AI量化机器人（V1以上限购）</span></td><td>CFM</td><td>800</td><td>7500</td><td>0.73</td><td>1000</td><td><span class="c">每日返息</span></td><td>500</td><td>231</td><td><span class="c">富达集团保险服务部</span></td><td><a class="xb" style="width:29.9px;background:#18bc9c"><svg class="fa" width="14.91" height="17.4" viewBox="128 0 1536 1792" style=""><path fill="#fff" d="M491 1536l91-91-235-235-91 91v107h128v128h107zm523-928q0-22-22-22-10 0-17 7l-542 542q-7 7-7 17 0 22 22 22 10 0 17-7l542-542q7-7 7-17zm-54-192l416 416-832 832h-416v-416zm683 96q0 53-37 90l-166 166-416-416 166-165q36-38 90-38 53 0 91 38l235 234q37 39 37 91z"/></svg></a><a class="xb" style="width:28.2px;background:#f75444;margin-left:5.8px"><svg class="fa" width="13.67" height="17.4" viewBox="192 0 1408 1792" style=""><path fill="#fff" d="M704 1376v-704q0-14-9-23t-23-9h-64q-14 0-23 9t-9 23v704q0 14 9 23t23 9h64q14 0 23-9t9-23zm256 0v-704q0-14-9-23t-23-9h-64q-14 0-23 9t-9 23v704q0 14 9 23t23 9h64q14 0 23-9t9-23zm256 0v-704q0-14-9-23t-23-9h-64q-14 0-23 9t-9 23v704q0 14 9 23t23 9h64q14 0 23-9t9-23zm-544-992h448l-48-117q-7-9-17-11h-317q-10 2-17 11zm928 32v64q0 14-9 23t-23 9h-96v948q0 83-47 143.500t-113 60.500h-832q-66 0-113-58.500t-47-141.500v-952h-96q-14 0-23-9t-9-23v-64q0-14 9-23t23-9h309l70-167q15-37 54-63t79-26h320q40 0 79 26t54 63l70 167h309q14 0 23 9t9 23z"/></svg></a></td></tr>
<tr><td><input class="cb" type="checkbox"></td><td>18</td><td><span class="c">AI量化机器人（V1以上限购）</span></td><td>ACNT</td><td>1000</td><td>7500</td><td>0.84</td><td>1000</td><td><span class="c">每日返息</span></td><td>500</td><td>459</td><td><span class="c">富达集团保险服务部</span></td><td><a class="xb" style="width:29.9px;background:#18bc9c"><svg class="fa" width="14.91" height="17.4" viewBox="128 0 1536 1792" style=""><path fill="#fff" d="M491 1536l91-91-235-235-91 91v107h128v128h107zm523-928q0-22-22-22-10 0-17 7l-542 542q-7 7-7 17 0 22 22 22 10 0 17-7l542-542q7-7 7-17zm-54-192l416 416-832 832h-416v-416zm683 96q0 53-37 90l-166 166-416-416 166-165q36-38 90-38 53 0 91 38l235 234q37 39 37 91z"/></svg></a><a class="xb" style="width:28.2px;background:#f75444;margin-left:5.8px"><svg class="fa" width="13.67" height="17.4" viewBox="192 0 1408 1792" style=""><path fill="#fff" d="M704 1376v-704q0-14-9-23t-23-9h-64q-14 0-23 9t-9 23v704q0 14 9 23t23 9h64q14 0 23-9t9-23zm256 0v-704q0-14-9-23t-23-9h-64q-14 0-23 9t-9 23v704q0 14 9 23t23 9h64q14 0 23-9t9-23zm256 0v-704q0-14-9-23t-23-9h-64q-14 0-23 9t-9 23v704q0 14 9 23t23 9h64q14 0 23-9t9-23zm-544-992h448l-48-117q-7-9-17-11h-317q-10 2-17 11zm928 32v64q0 14-9 23t-23 9h-96v948q0 83-47 143.500t-113 60.500h-832q-66 0-113-58.500t-47-141.500v-952h-96q-14 0-23-9t-9-23v-64q0-14 9-23t23-9h309l70-167q15-37 54-63t79-26h320q40 0 79 26t54 63l70 167h309q14 0 23 9t9 23z"/></svg></a></td></tr>
<tr><td><input class="cb" type="checkbox"></td><td>19</td><td><span class="c">AI量化机器人（V1以上限购）</span></td><td>FD</td><td>1500</td><td>10000</td><td>0.84</td><td>1000</td><td><span class="c">每日返息</span></td><td>500</td><td>192</td><td><span class="c">富达集团保险服务部</span></td><td><a class="xb" style="width:29.9px;background:#18bc9c"><svg class="fa" width="14.91" height="17.4" viewBox="128 0 1536 1792" style=""><path fill="#fff" d="M491 1536l91-91-235-235-91 91v107h128v128h107zm523-928q0-22-22-22-10 0-17 7l-542 542q-7 7-7 17 0 22 22 22 10 0 17-7l542-542q7-7 7-17zm-54-192l416 416-832 832h-416v-416zm683 96q0 53-37 90l-166 166-416-416 166-165q36-38 90-38 53 0 91 38l235 234q37 39 37 91z"/></svg></a><a class="xb" style="width:28.2px;background:#f75444;margin-left:5.8px"><svg class="fa" width="13.67" height="17.4" viewBox="192 0 1408 1792" style=""><path fill="#fff" d="M704 1376v-704q0-14-9-23t-23-9h-64q-14 0-23 9t-9 23v704q0 14 9 23t23 9h64q14 0 23-9t9-23zm256 0v-704q0-14-9-23t-23-9h-64q-14 0-23 9t-9 23v704q0 14 9 23t23 9h64q14 0 23-9t9-23zm256 0v-704q0-14-9-23t-23-9h-64q-14 0-23 9t-9 23v704q0 14 9 23t23 9h64q14 0 23-9t9-23zm-544-992h448l-48-117q-7-9-17-11h-317q-10 2-17 11zm928 32v64q0 14-9 23t-23 9h-96v948q0 83-47 143.500t-113 60.500h-832q-66 0-113-58.500t-47-141.500v-952h-96q-14 0-23-9t-9-23v-64q0-14 9-23t23-9h309l70-167q15-37 54-63t79-26h320q40 0 79 26t54 63l70 167h309q14 0 23 9t9 23z"/></svg></a></td></tr>
<tr><td><input class="cb" type="checkbox"></td><td>20</td><td><span class="c">AI量化机器人（V1以上限购）</span></td><td>SCB</td><td>2000</td><td>10000</td><td>0.84</td><td>1000</td><td><span class="c">每日返息</span></td><td>500</td><td>113</td><td><span class="c">富达集团保险服务部</span></td><td><a class="xb" style="width:29.9px;background:#18bc9c"><svg class="fa" width="14.91" height="17.4" viewBox="128 0 1536 1792" style=""><path fill="#fff" d="M491 1536l91-91-235-235-91 91v107h128v128h107zm523-928q0-22-22-22-10 0-17 7l-542 542q-7 7-7 17 0 22 22 22 10 0 17-7l542-542q7-7 7-17zm-54-192l416 416-832 832h-416v-416zm683 96q0 53-37 90l-166 166-416-416 166-165q36-38 90-38 53 0 91 38l235 234q37 39 37 91z"/></svg></a><a class="xb" style="width:28.2px;background:#f75444;margin-left:5.8px"><svg class="fa" width="13.67" height="17.4" viewBox="192 0 1408 1792" style=""><path fill="#fff" d="M704 1376v-704q0-14-9-23t-23-9h-64q-14 0-23 9t-9 23v704q0 14 9 23t23 9h64q14 0 23-9t9-23zm256 0v-704q0-14-9-23t-23-9h-64q-14 0-23 9t-9 23v704q0 14 9 23t23 9h64q14 0 23-9t9-23zm256 0v-704q0-14-9-23t-23-9h-64q-14 0-23 9t-9 23v704q0 14 9 23t23 9h64q14 0 23-9t9-23zm-544-992h448l-48-117q-7-9-17-11h-317q-10 2-17 11zm928 32v64q0 14-9 23t-23 9h-96v948q0 83-47 143.500t-113 60.500h-832q-66 0-113-58.500t-47-141.500v-952h-96q-14 0-23-9t-9-23v-64q0-14 9-23t23-9h309l70-167q15-37 54-63t79-26h320q40 0 79 26t54 63l70 167h309q14 0 23 9t9 23z"/></svg></a></td></tr>
<tr><td><input class="cb" type="checkbox"></td><td>21</td><td><span class="c">AI量化机器人（V2以上限购）</span></td><td><span style="letter-spacing:-0.04px">Verizon Conmunications</span></td><td>300</td><td>15000</td><td>0.92</td><td>1000</td><td><span class="c">每日返息</span></td><td>1000</td><td>758</td><td><span class="c">富达集团保险服务部</span></td><td><a class="xb" style="width:29.9px;background:#18bc9c"><svg class="fa" width="14.91" height="17.4" viewBox="128 0 1536 1792" style=""><path fill="#fff" d="M491 1536l91-91-235-235-91 91v107h128v128h107zm523-928q0-22-22-22-10 0-17 7l-542 542q-7 7-7 17 0 22 22 22 10 0 17-7l542-542q7-7 7-17zm-54-192l416 416-832 832h-416v-416zm683 96q0 53-37 90l-166 166-416-416 166-165q36-38 90-38 53 0 91 38l235 234q37 39 37 91z"/></svg></a><a class="xb" style="width:28.2px;background:#f75444;margin-left:5.8px"><svg class="fa" width="13.67" height="17.4" viewBox="192 0 1408 1792" style=""><path fill="#fff" d="M704 1376v-704q0-14-9-23t-23-9h-64q-14 0-23 9t-9 23v704q0 14 9 23t23 9h64q14 0 23-9t9-23zm256 0v-704q0-14-9-23t-23-9h-64q-14 0-23 9t-9 23v704q0 14 9 23t23 9h64q14 0 23-9t9-23zm256 0v-704q0-14-9-23t-23-9h-64q-14 0-23 9t-9 23v704q0 14 9 23t23 9h64q14 0 23-9t9-23zm-544-992h448l-48-117q-7-9-17-11h-317q-10 2-17 11zm928 32v64q0 14-9 23t-23 9h-96v948q0 83-47 143.500t-113 60.500h-832q-66 0-113-58.500t-47-141.500v-952h-96q-14 0-23-9t-9-23v-64q0-14 9-23t23-9h309l70-167q15-37 54-63t79-26h320q40 0 79 26t54 63l70 167h309q14 0 23 9t9 23z"/></svg></a></td></tr>
</tbody></table>
<div class="pinfo">显示第 1 到第 10 条记录，总共 29 条记录 每页显示</div>
<div class="psize">10 <span style="display:inline-block;width:0;height:0;border-left:5.2px solid transparent;border-right:5.2px solid transparent;border-bottom:5.8px solid #444;vertical-align:2px"></span></div>
<div class="pinfo" style="left:874px">条记录</div>
<a class="pg" style="left:1832px;width:91.0px;border-radius:4px 0 0 4px;">上一页</a>
<a class="pg" style="left:1922px;width:46.0px;background:#444c69;border-color:#444c69;color:#fff;z-index:2;">1</a>
<a class="pg" style="left:1968px;width:44.0px;">2</a>
<a class="pg" style="left:2011px;width:45.0px;">3</a>
<a class="pg" style="left:2055px;width:93.0px;">下一页</a>
<div class="jump" style="position:absolute;left:2155.2px;top:896.2px;width:68.8px;height:44.8px;border:1.3px solid #d2d6de;background:#fff"><input type="text"></div>
<a class="pg" style="left:2230.4px;top:897.2px;width:70.6px;height:43.4px;line-height:43.4px;border-radius:4px;background:#f4f4f4;font-size:18.2px;color:#444">跳转</a>
</body></html>
